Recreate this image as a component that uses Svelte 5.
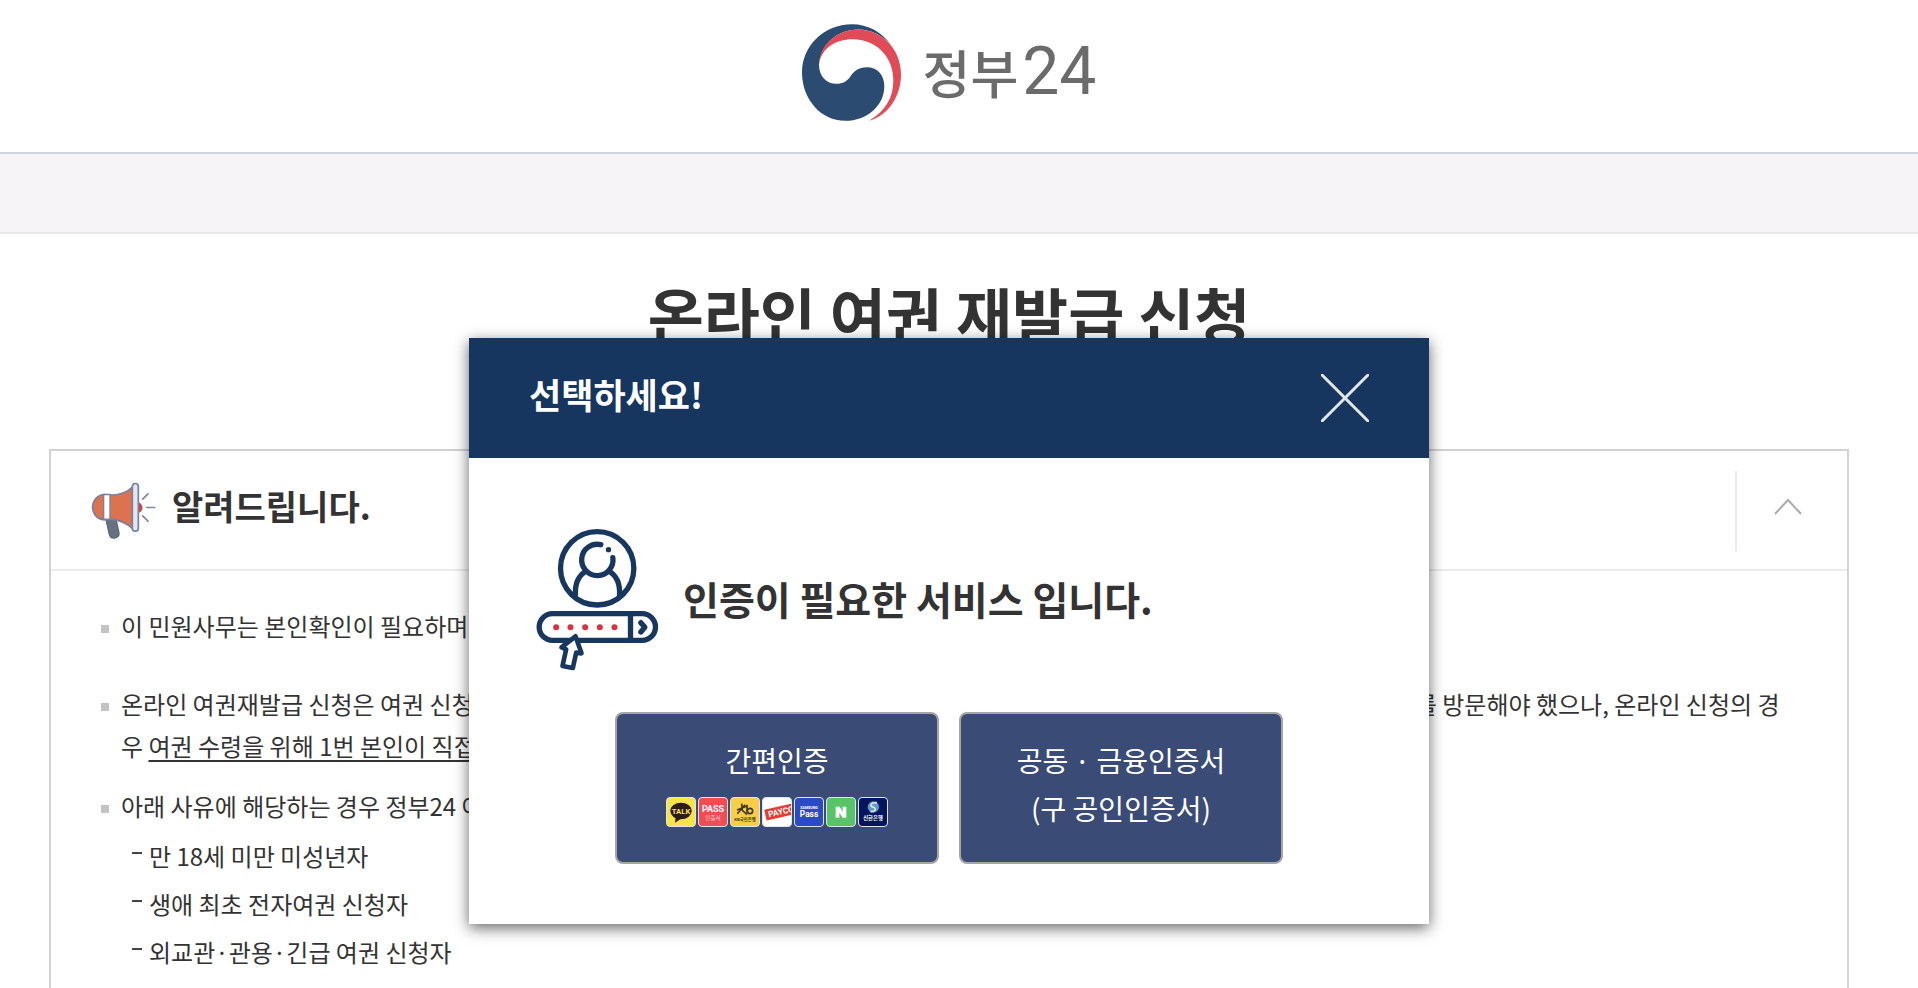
<script>
  let modalOpen = $state(true);
  let noticeOpen = $state(true);

  const exclusions = [
    "만 18세 미만 미성년자",
    "생애 최초 전자여권 신청자",
    "외교관·관용·긴급 여권 신청자",
  ];
</script>

<div class="page">
  <header class="site-header">
    <a class="logo" href="/" aria-label="정부24">
      <svg class="logo-mark" viewBox="72 72 297 290" aria-hidden="true">
        <path
          fill="#2b4c70"
          d="M342 137C312 95 270 72 222 72C138 72 72 137 72 217C72 298 130 362 201 362C268 362 319 315 319 258C319 222 296 201 267 201C242 201 228 212 217 229C208 243 195 251 175 251C145 251 123 228 123 193C128 130 180 88 240 88C280 88 318 108 342 137Z"
        />
        <path
          fill="#df4b57"
          d="M123 193C126 130 180 88 240 88C318 90 369 152 369 222C369 290 330 345 273 362C325 330 346 290 346 240C346 165 290 117 225 117C170 117 130 145 123 193Z"
        />
      </svg>
      <span class="logo-name">정부<span class="logo-num">24</span></span>
    </a>
  </header>
  <div class="band"></div>

  <main class="content">
    <h1>온라인 여권 재발급 신청</h1>

    <section class="notice">
      <div class="notice-head">
        <svg class="megaphone" viewBox="272 155 195 170" aria-hidden="true">
          <path fill="#66727f" stroke="#5d6480" stroke-width="4" d="M317 266L347 266L356 308C358 326 330 328 327 312Z" />
          <path fill="#dd7250" stroke="#76809f" stroke-width="5" d="M312 192C268 194 262 262 312 268L330 266C360 268 382 280 398 296L398 168C382 184 360 194 330 194Z" />
          <path fill="#fff" stroke="#76809f" stroke-width="4" d="M310 192H329V266H310Z" />
          <path fill="#c6474b" d="M413 216C431 218 431 245 413 247Z" />
          <rect x="396" y="159" width="18" height="143" rx="9" fill="#e3e6ef" stroke="#76809f" stroke-width="5" />
          <path stroke="#7d87a5" stroke-width="5" stroke-linecap="round" d="M427 206L443 190M439 231H463M427 256L443 272" />
        </svg>
        <h2>알려드립니다.</h2>
        <button
          class="toggle"
          aria-label={noticeOpen ? "접기" : "펼치기"}
          aria-expanded={noticeOpen}
          onclick={() => (noticeOpen = !noticeOpen)}
        >
          <svg class:closed={!noticeOpen} viewBox="0 0 28 18" aria-hidden="true">
            <path d="M1 16L14 2L27 16" fill="none" stroke="#aaa" stroke-width="2" />
          </svg>
        </button>
      </div>

      {#if noticeOpen}
        <ul class="notice-list">
          <li>이 민원사무는 본인확인이 필요하며, 본인만 신청할 수 있습니다.</li>
          <li>
            온라인 여권재발급 신청은 여권 신청 및 수령을 위해 외교부가 지정한
            시청·군청 등의 여권사무 대행기관에 본인이 직접 2번 이상 창구를
            방문해야 했으나, 온라인 신청의 경우
            <u>여권 수령을 위해 1번 본인이 직접 방문</u>하면 됩니다.
          </li>
          <li>
            아래 사유에 해당하는 경우 정부24 여권 재발급 신청이 불가합니다.
            <ul class="sub-list">
              {#each exclusions as item}
                <li>{item}</li>
              {/each}
            </ul>
          </li>
        </ul>
      {/if}
    </section>
  </main>

  {#if modalOpen}
    <div class="modal-layer">
      <div class="modal" role="dialog" aria-labelledby="modal-title">
        <div class="modal-head">
          <h2 id="modal-title">선택하세요!</h2>
          <button class="close" aria-label="닫기" onclick={() => (modalOpen = false)}>
            <svg viewBox="0 0 48 48" aria-hidden="true">
              <path d="M0 0L48 48M48 0L0 48" stroke="#e3e7ee" stroke-width="3" />
            </svg>
          </button>
        </div>

        <div class="modal-body">
          <div class="message">
            <svg class="auth-icon" viewBox="78 54 368 432" fill="none" stroke="#17375e" stroke-width="16" aria-hidden="true">
              <circle cx="261" cy="175" r="110" />
              <path stroke-linecap="round" d="M272 104A47 47 0 1 0 308 143" />
              <circle cx="295" cy="119" r="8" fill="#17375e" stroke="none" />
              <path d="M196 258C193 218 206 196 228 183M328 258C331 218 318 196 296 183" />
              <rect x="87" y="311" width="349" height="80" rx="40" />
              <path d="M361 311V391" />
              <path stroke-linecap="round" stroke-linejoin="round" d="M392 338L404 352L392 366" />
              <g fill="#d8343f" stroke="none">
                {#each [138, 181, 225, 269, 313] as x}
                  <circle cx={x} cy="352" r="9" />
                {/each}
              </g>
              <path fill="#fff" stroke-width="14" stroke-linejoin="round" d="M196 379L214 430L198 428L188 474L157 468L168 418L154 412Z" />
            </svg>
            <p>인증이 필요한 서비스 입니다.</p>
          </div>

          <div class="actions">
            <button class="action">
              <span>간편인증</span>
              <span class="brands">
                <svg viewBox="0 0 84 84" style:background="#f8e34b" role="img" aria-label="카카오톡">
                  <ellipse cx="42" cy="39" rx="32" ry="25" fill="#2d1c1c" />
                  <path d="M26 56L24 74L42 62Z" fill="#2d1c1c" />
                  <text x="42" y="48" font-size="23" fill="#f8e34b">TALK</text>
                </svg>
                <svg viewBox="0 0 84 84" style:background="#ee4d54" role="img" aria-label="PASS 인증서">
                  <text x="42" y="43" font-size="27" fill="#fff">PASS</text>
                  <text x="42" y="66" font-size="17" fill="#fbd0d2" class="light">인증서</text>
                </svg>
                <svg viewBox="0 0 84 84" style:background="#f9ce46" role="img" aria-label="KB국민은행">
                  <path d="M18 36L48 24M19 47L42 20M32 17L34 38M33 36L48 50M48 20V44" fill="none" stroke="#443a28" stroke-width="5" />
                  <circle cx="57" cy="39" r="8" fill="none" stroke="#443a28" stroke-width="5" />
                  <text x="42" y="68" font-size="13" fill="#443a28">KB국민은행</text>
                </svg>
                <svg viewBox="0 0 84 84" style:background="#fff" role="img" aria-label="PAYCO">
                  <g transform="rotate(-13 42 42)">
                    <rect x="6" y="27" width="90" height="33" fill="#e63c34" />
                    <text x="54" y="52" font-size="25" fill="#fff">PAYCO</text>
                  </g>
                </svg>
                <svg viewBox="0 0 84 84" style:background="#2b4bc4" role="img" aria-label="SAMSUNG Pass">
                  <text x="42" y="34" font-size="11" fill="#fff">SAMSUNG</text>
                  <text x="42" y="57" font-size="25" fill="#fff">Pass</text>
                </svg>
                <svg viewBox="0 0 84 84" style:background="#58c467" role="img" aria-label="네이버">
                  <path d="M26 26H38L47 41V26H58V59H47L37 44V59H26Z" fill="#fff" />
                </svg>
                <svg viewBox="0 0 84 84" style:background="#04155f" role="img" aria-label="신한은행">
                  <circle cx="43" cy="27" r="17" fill="#5b9ad4" />
                  <path d="M54 14C30 14 34 25 43 28S52 40 34 41" fill="none" stroke="#e9e2c4" stroke-width="5" />
                  <text x="42" y="67" font-size="16" fill="#fff">신한은행</text>
                </svg>
              </span>
            </button>
            <button class="action">
              <span>공동 · 금융인증서</span>
              <span>(구 공인인증서)</span>
            </button>
          </div>
        </div>
      </div>
    </div>
  {/if}
</div>

<style>
  :global(body) {
    margin: 0;
  }

  .page {
    position: relative;
    height: 100vh;
    overflow: hidden;
    background: #fff;
    color: #333;
    font-family: "Noto Sans CJK KR", "Noto Sans", sans-serif;
    font-size: 24px;
    line-height: 42px;
  }

  h1,
  h2,
  p,
  ul {
    margin: 0;
    padding: 0;
  }

  button {
    padding: 0;
    border: none;
    background: none;
    color: inherit;
    font: inherit;
    cursor: pointer;
  }

  svg {
    display: block;
    flex: none;
  }

  .site-header {
    display: flex;
    justify-content: center;
    padding: 24px 20px 32px 0;
    border-bottom: 2px solid #ced3e2;
  }

  .logo {
    display: flex;
    align-items: center;
    gap: 22px;
    height: 96px;
    color: #6b6b6b;
    text-decoration: none;
  }

  .logo-mark {
    width: 99px;
    height: 97px;
  }

  .logo-name {
    display: flex;
    align-items: center;
    font-size: 52px;
    font-weight: 500;
    line-height: 92px;
  }

  .logo-num {
    margin-left: 4px;
    font-family: Roboto, sans-serif;
    font-size: 66px;
    font-weight: 400;
    line-height: 96px;
  }

  .band {
    height: 78px;
    background: #f6f4f6;
    border-bottom: 2px solid #e8e7e9;
  }

  .content {
    padding: 40px 69px 0 49px;
  }

  h1 {
    margin-bottom: 95px;
    font-size: 61px;
    font-weight: 700;
    line-height: 80px;
    text-align: center;
  }

  .notice {
    border: 2px solid #d2d2d2;
    padding-bottom: 60px;
  }

  .notice-head {
    display: flex;
    align-items: center;
    height: 118px;
    padding-left: 40px;
    border-bottom: 2px solid #ebebeb;
  }

  .megaphone {
    width: 65px;
    height: 57px;
  }

  .notice-head h2 {
    flex: 1;
    margin-left: 16px;
    padding-bottom: 8px;
    font-size: 34px;
    font-weight: 700;
  }

  .toggle {
    display: flex;
    align-items: center;
    justify-content: center;
    width: 112px;
    height: 80px;
    margin-top: 2px;
    padding: 0 8px 8px 0;
    border-left: 2px solid #ebebeb;
  }

  .toggle svg {
    width: 28px;
    height: 18px;
  }

  .toggle .closed {
    transform: rotate(180deg);
  }

  .notice-list {
    padding: 34px 66px 0 70px;
    list-style: none;
  }

  .notice-list > li {
    position: relative;
    margin-bottom: 18px;
  }

  .notice-list > li:first-child {
    margin-bottom: 36px;
  }

  .notice-list > li::before {
    content: "";
    position: absolute;
    top: 20px;
    left: -20px;
    width: 8px;
    height: 8px;
    background: #c3c3c3;
  }

  u {
    text-decoration-thickness: 2px;
    text-underline-offset: 4px;
  }

  .sub-list {
    padding: 5px 0 0 28px;
    line-height: 48px;
    list-style: none;
  }

  .sub-list li {
    position: relative;
  }

  .sub-list li::before {
    content: "";
    position: absolute;
    top: 20px;
    left: -17px;
    width: 10px;
    height: 2px;
    background: #444;
  }

  .modal-layer {
    position: absolute;
    top: 338px;
    left: 0;
    right: 20px;
    display: flex;
    justify-content: center;
  }

  .modal {
    width: 960px;
    max-width: 100%;
    background: #fff;
    box-shadow: 0 4px 14px rgba(0, 0, 0, 0.6);
  }

  .modal-head {
    display: flex;
    align-items: center;
    justify-content: space-between;
    height: 120px;
    padding: 0 60px;
    background: #16365f;
    color: #fff;
  }

  .modal-head h2 {
    padding-bottom: 8px;
    font-size: 35px;
    font-weight: 700;
  }

  .close svg {
    width: 48px;
    height: 48px;
  }

  .modal-body {
    padding: 70px 60px 60px;
  }

  .message {
    display: flex;
    align-items: center;
    gap: 24px;
    padding-left: 7px;
  }

  .auth-icon {
    width: 123px;
    height: 144px;
  }

  .message p {
    padding-bottom: 4px;
    font-size: 39px;
    font-weight: 700;
  }

  .actions {
    display: flex;
    justify-content: center;
    gap: 20px;
    margin-top: 40px;
  }

  .action {
    display: flex;
    flex-direction: column;
    align-items: center;
    box-sizing: border-box;
    width: 324px;
    height: 152px;
    padding-top: 22px;
    border: 2px solid #a6a6a6;
    border-radius: 8px;
    background: #3a4b76;
    color: #fff;
    font-size: 28px;
    line-height: 48px;
  }

  .brands {
    display: flex;
    gap: 2px;
    margin-top: 13px;
  }

  .brands svg {
    width: 28px;
    height: 28px;
    border: 1px solid #dfe4f2;
    border-radius: 4px;
  }

  .brands text {
    font-family: Roboto, "Noto Sans CJK KR", sans-serif;
    font-weight: 700;
    text-anchor: middle;
  }

  .brands .light {
    font-weight: 400;
  }
</style>
